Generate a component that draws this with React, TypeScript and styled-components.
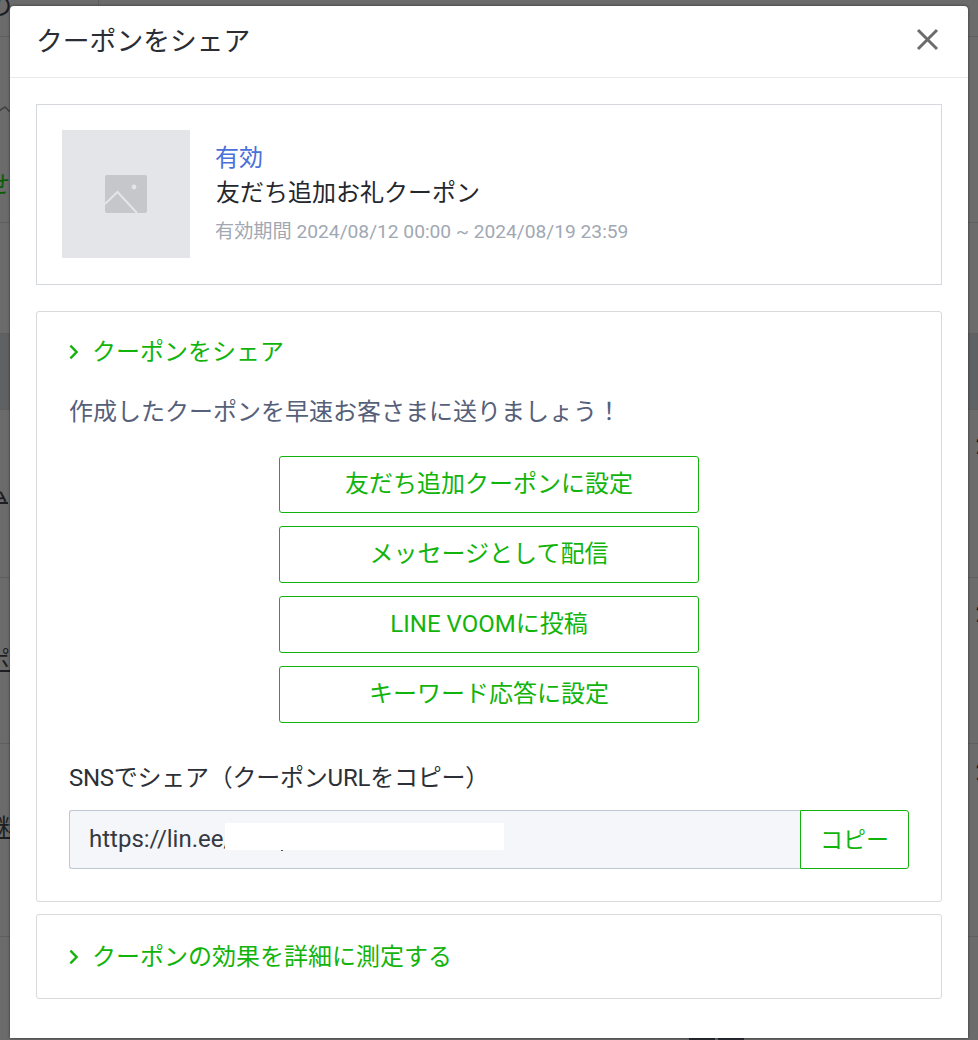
import React from 'react';
import styled, { createGlobalStyle } from 'styled-components';

const GlobalStyle = createGlobalStyle`
  html, body {
    margin: 0;
    padding: 0;
    background: #6b6b6b;
  }
  body {
    font-family: Roboto, "Noto Sans CJK JP", sans-serif;
    font-size: 24px;
  }
  * {
    box-sizing: border-box;
  }
`;

const GREEN = '#12b40b';

const Page = styled.div`
  position: relative;
  width: 978px;
  height: 1040px;
  overflow: hidden;
  background: #6b6b6b;
`;

const Row = styled.div<{ $height: number; $dim?: boolean }>`
  display: flex;
  justify-content: space-between;
  align-items: flex-start;
  height: ${({ $height }) => $height}px;
  border-bottom: 1px solid #5f5f5f;
  background: ${({ $dim }) => ($dim ? '#5f6163' : 'transparent')};
  line-height: 36px;
  color: #1d1e21;
  overflow: hidden;
  white-space: nowrap;
`;

const LinkName = styled.span<{ $top: number; $left: number }>`
  margin-top: ${({ $top }) => $top}px;
  margin-left: ${({ $left }) => $left}px;
  text-decoration: underline;
  text-decoration-thickness: 2px;
`;

const Stamp = styled.span<{ $top: number }>`
  margin-top: ${({ $top }) => $top}px;
  margin-right: -11px;
`;

const TopFragment = styled.span`
  margin-top: -12px;
  margin-left: -14px;
  font-size: 26px;
`;

const CellDivider = styled.span`
  width: 1px;
  height: 100%;
  margin-right: auto;
  margin-left: 86px;
  background: #5f5f5f;
`;

const BackColumn = styled.div`
  display: flex;
  flex-direction: column;
  align-items: flex-start;
`;

const BackChevron = styled.svg`
  margin-top: 66px;
  margin-left: -1px;
`;

const BackGreen = styled.span`
  margin-top: 50px;
  margin-left: -14px;
  color: #0c5c06;
`;

const PagerStub = styled.div`
  display: flex;
  gap: 3px;
  margin: 1036px 0 0 689px;
`;

const PagerCell = styled.span`
  width: 26px;
  height: 4px;
  background: #2a2c33;
`;

const BackFooter = styled.div`
  position: absolute;
  inset: 0;
`;

const Modal = styled.div`
  position: absolute;
  top: 6px;
  left: 10px;
  display: flex;
  flex-direction: column;
  width: 958px;
  height: 1032px;
  background: #fff;
  border-radius: 4px 4px 0 0;
  box-shadow: 0 0 3px rgba(0, 0, 0, 0.55);
`;

const Header = styled.header`
  display: flex;
  flex: none;
  align-items: center;
  justify-content: space-between;
  height: 72px;
  padding: 0 29px 4px 26px;
  border-bottom: 1px solid #e8e9eb;
`;

const Title = styled.h1`
  margin: 0;
  font-size: 26.8px;
  font-weight: 400;
  color: #2a2d33;
`;

const CloseButton = styled.button`
  display: flex;
  padding: 0;
  border: 0;
  background: none;
`;

const Body = styled.div`
  display: flex;
  flex-direction: column;
  padding: 26px 26px 0;
`;

const CouponCard = styled.section`
  display: flex;
  gap: 26px;
  height: 181px;
  padding: 25px;
  border: 1px solid #d5d8dd;
`;

const Thumbnail = styled.div`
  display: flex;
  flex: none;
  align-items: center;
  justify-content: center;
  width: 128px;
  height: 128px;
  background: #e3e5e9;
`;

const CouponInfo = styled.div`
  display: flex;
  flex-direction: column;
  padding-top: 10px;
`;

const Status = styled.div`
  margin-left: -1px;
  line-height: 36px;
  color: #4a70d9;
`;

const CouponName = styled.div`
  margin-top: -1px;
  line-height: 36px;
  color: #24272c;
`;

const Period = styled.div`
  margin-top: 9px;
  margin-left: -1px;
  font-size: 19.2px;
  line-height: 24px;
  color: #a1a8b3;
`;

const Panel = styled.section<{ $height: number; $gap: number }>`
  height: ${({ $height }) => $height}px;
  margin-top: ${({ $gap }) => $gap}px;
  padding: 0 32px;
  border: 1px solid #d8d9db;
  border-radius: 3px;
`;

const PanelToggle = styled.div<{ $top: number }>`
  display: flex;
  align-items: center;
  gap: 13px;
  margin-top: ${({ $top }) => $top}px;
  line-height: 36px;
  color: ${GREEN};
`;

const Lead = styled.p`
  margin: 24px 0 0;
  line-height: 36px;
  color: #566079;
`;

const ActionList = styled.div`
  display: flex;
  flex-direction: column;
  align-items: center;
  gap: 13px;
  margin-top: 26px;
`;

const ActionButton = styled.button`
  width: 420px;
  height: 57px;
  padding: 0 0 6px;
  border: 1px solid ${GREEN};
  border-radius: 3px;
  background: #fff;
  font: inherit;
  color: ${GREEN};
`;

const FieldLabel = styled.div`
  margin-top: 37px;
  line-height: 36px;
  letter-spacing: -0.25px;
  color: #2c3036;
`;

const CopyField = styled.div`
  display: flex;
  width: 840px;
  height: 59px;
  margin-top: 14px;
`;

const UrlBox = styled.div`
  position: relative;
  display: flex;
  flex: 1;
  align-items: center;
  padding: 0 0 2px 19px;
  border: 1px solid #bfc7d3;
  border-right: 0;
  border-radius: 3px 0 0 3px;
  background: #f4f6f9;
  color: #353942;
`;

const Redaction = styled.span`
  position: absolute;
  top: 12px;
  left: 155px;
  width: 279px;
  height: 27px;
  background: #fff;

  &::after {
    content: '';
    position: absolute;
    bottom: -1px;
    left: 56px;
    width: 2px;
    height: 1px;
    background: #555;
  }
`;

const CopyButton = styled.button`
  width: 109px;
  padding: 0 0 3px;
  border: 1px solid ${GREEN};
  border-radius: 0 3px 3px 0;
  background: #fff;
  font: inherit;
  font-size: 23px;
  color: ${GREEN};
`;

const Chevron = () => (
  <svg width="10" height="16" viewBox="0 0 10 16" fill="none">
    <path d="M1.4 1.6 7.6 8l-6.2 6.4" stroke={GREEN} strokeWidth="2.4" />
  </svg>
);

const actions = [
  '友だち追加クーポンに設定',
  'メッセージとして配信',
  'LINE VOOMに投稿',
  'キーワード応答に設定',
];

export default function App() {
  return (
    <Page>
      <GlobalStyle />
      <Row $height={37}>
        <TopFragment>の</TopFragment>
        <CellDivider />
      </Row>
      <Row $height={186}>
        <BackColumn>
          <BackChevron width="11" height="14" viewBox="0 0 11 14" fill="none">
            <path d="M0 5 6 1l5 5" stroke="#3e3e3e" strokeWidth="1.4" transform="translate(0 3)" />
          </BackChevron>
          <BackGreen>せ</BackGreen>
        </BackColumn>
      </Row>
      <Row $height={111} />
      <Row $height={76} $dim />
      <Row $height={168}>
        <LinkName $top={65} $left={-16}>ム</LinkName>
        <Stamp $top={18}>2</Stamp>
      </Row>
      <Row $height={166}>
        <LinkName $top={65} $left={-14}>ポ</LinkName>
        <Stamp $top={18}>2</Stamp>
      </Row>
      <Row $height={193}>
        <LinkName $top={66} $left={-2}>料</LinkName>
        <Stamp $top={10}>2</Stamp>
      </Row>
      <BackFooter>
        <PagerStub>
          <PagerCell />
          <PagerCell />
        </PagerStub>
      </BackFooter>

      <Modal>
        <Header>
          <Title>クーポンをシェア</Title>
          <CloseButton aria-label="閉じる">
            <svg width="23" height="23" viewBox="0 0 23 23" fill="none">
              <path d="M2 2l19 19M21 2 2 21" stroke="#6c6c6c" strokeWidth="3" />
            </svg>
          </CloseButton>
        </Header>
        <Body>
          <CouponCard>
            <Thumbnail>
              <svg width="44" height="40" viewBox="0 0 44 40">
                <rect x="1" y="1" width="42" height="38" rx="2" fill="#c5c7cb" />
                <circle cx="30" cy="13" r="2.4" fill="#e3e5e9" />
                <path d="M1 30 13.5 18 33 39" fill="none" stroke="#e3e5e9" strokeWidth="2" />
              </svg>
            </Thumbnail>
            <CouponInfo>
              <Status>有効</Status>
              <CouponName>友だち追加お礼クーポン</CouponName>
              <Period>有効期間 2024/08/12 00:00 ~ 2024/08/19 23:59</Period>
            </CouponInfo>
          </CouponCard>

          <Panel $height={591} $gap={26}>
            <PanelToggle $top={22}>
              <Chevron />
              クーポンをシェア
            </PanelToggle>
            <Lead>作成したクーポンを早速お客さまに送りましょう！</Lead>
            <ActionList>
              {actions.map(label => (
                <ActionButton key={label}>{label}</ActionButton>
              ))}
            </ActionList>
            <FieldLabel>SNSでシェア（クーポンURLをコピー）</FieldLabel>
            <CopyField>
              <UrlBox>
                https://lin.ee/
                <Redaction />
              </UrlBox>
              <CopyButton>コピー</CopyButton>
            </CopyField>
          </Panel>

          <Panel $height={85} $gap={12}>
            <PanelToggle $top={24}>
              <Chevron />
              クーポンの効果を詳細に測定する
            </PanelToggle>
          </Panel>
        </Body>
      </Modal>
    </Page>
  );
}
